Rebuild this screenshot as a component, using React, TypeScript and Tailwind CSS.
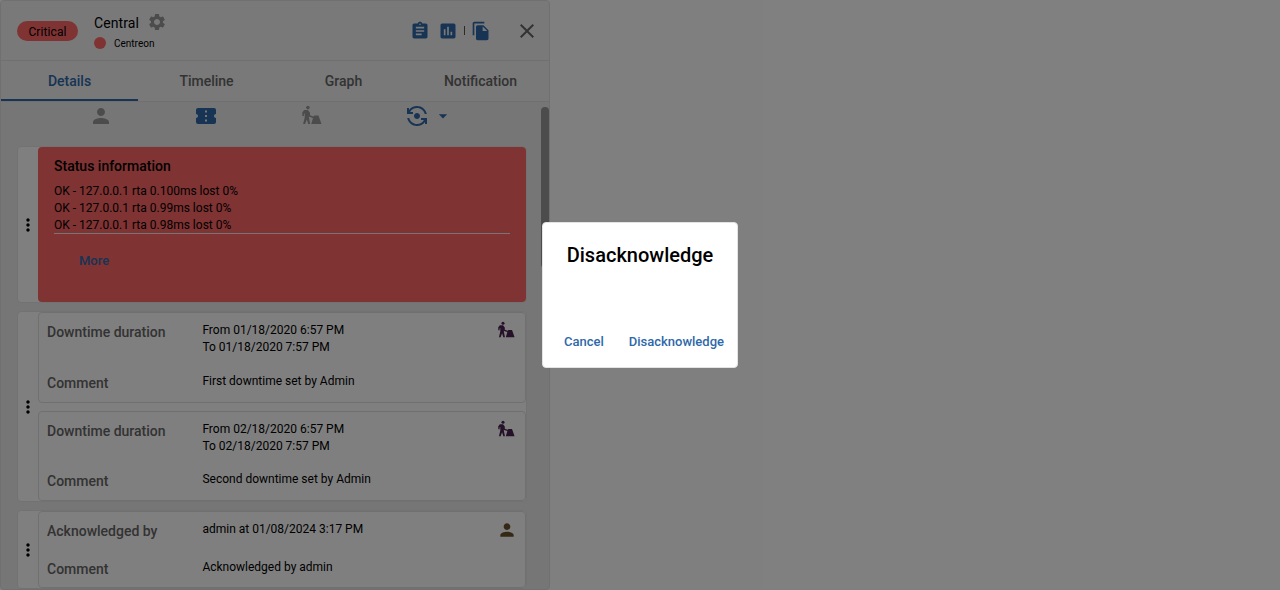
import type { ReactNode } from 'react';
import {
  MdArrowDropDown,
  MdAssessment,
  MdAssignment,
  MdClose,
  MdConfirmationNumber,
  MdFileCopy,
  MdFlipCameraAndroid,
  MdMoreVert,
  MdPerson,
  MdSettings,
} from 'react-icons/md';

function DowntimeIcon({ className }: { className: string }) {
  return (
    <svg viewBox="0 0 20 20" className={className} fill="currentColor">
      <circle cx="5.9" cy="2.6" r="1.8" />
      <path d="M2.2 5.100H5.900L8 7.700V10.200L11.400 11.500L12.300 10.500H16.500L19.500 19H9.200L11 13L7.200 11.700L6.800 11.200L7 13.100L8.200 19H6.200L4.800 14.400L3.100 19H1.100L2.700 12.400V8.300L1.900 8.900V11H.3V7.400Z" />
    </svg>
  );
}

function Group({ className, children }: { className: string; children: ReactNode }) {
  return (
    <section
      className={`flex w-[510px] shrink-0 rounded-[4px] border border-[#e4e4e4] bg-white ${className}`}
    >
      <div className="flex w-5 shrink-0 items-center justify-center text-black">
        <MdMoreVert className="size-5 shrink-0" />
      </div>
      <div className="flex min-w-0 flex-1 flex-col gap-2">{children}</div>
    </section>
  );
}

interface EntryProps {
  label: string;
  lines: string[];
  comment: string;
  icon: ReactNode;
  className: string;
  commentClass: string;
}

function Entry({ label, lines, comment, icon, className, commentClass }: EntryProps) {
  return (
    <article className={`relative rounded-[4px] border border-[#e0e0e0] bg-white pl-2 ${className}`}>
      <div className="flex pt-[9px]">
        <div className="w-[155.4px] text-sm font-medium leading-5 text-[#666]">{label}</div>
        <div className="text-xs leading-[17px]">
          {lines.map((line) => (
            <p key={line}>{line}</p>
          ))}
        </div>
      </div>
      <div className={`flex ${commentClass}`}>
        <div className="w-[155.4px] text-sm font-medium leading-5 text-[#666]">Comment</div>
        <p className="text-xs leading-[17px]">{comment}</p>
      </div>
      <div className="absolute right-2 top-2">{icon}</div>
    </article>
  );
}

const tabs = ['Details', 'Timeline', 'Graph', 'Notification'];

export default function App() {
  return (
    <div className="relative h-[590px] w-[1280px] overflow-hidden bg-white font-[Roboto,sans-serif] text-black">
      <main className="flex h-[590px] w-[550px] flex-col overflow-hidden rounded-[4px] border border-[#e0e0e0] bg-[#ececec]">
        <header className="flex h-[60px] shrink-0 items-center border-b border-[#e0e0e0] bg-[#f2f2f2] pl-4">
          <span className="mt-px flex h-5 w-[61px] items-center justify-center rounded-full bg-[#ff6666] pt-px text-xs tracking-[0.1px]">
            Critical
          </span>
          <div className="ml-4 flex flex-1 flex-col">
            <div className="flex h-6 items-center gap-2">
              <h1 className="text-sm tracking-[0.1px]">Central</h1>
              <MdSettings className="-mt-0.5 size-5 text-[#999]" />
            </div>
            <div className="flex h-4 items-center pt-px">
              <span className="size-3 rounded-full bg-[#ff6666]" />
              <span className="ml-2 text-[10px]">Centreon</span>
            </div>
          </div>
          <div className="flex items-center text-[#2e68aa]">
            <MdAssignment className="size-5" />
            <MdAssessment className="ml-2 size-5" />
            <span className="ml-[6px] h-[9px] w-px bg-[#555]" />
            <MdFileCopy className="ml-[6px] size-5" />
          </div>
          <MdClose className="ml-[24px] mr-[10px] size-6 text-[#666]" />
        </header>
        <nav className="flex h-[41px] shrink-0 border-b border-[#e0e0e0] bg-[#f2f2f2]">
          {tabs.map((tab, index) => (
            <div
              key={tab}
              className={`flex w-[137px] items-center justify-center border-b-2 pt-0.5 text-sm font-medium ${
                index === 0 ? 'border-[#2e68aa] text-[#2e68aa]' : 'border-transparent text-[#666]'
              }`}
            >
              {tab}
            </div>
          ))}
        </nav>
        <div className="flex min-h-0 flex-1">
          <div className="flex w-[540px] flex-col overflow-hidden pl-4">
            <div className="flex h-[44px] shrink-0 items-start pt-[2px]">
              <MdPerson className="ml-[72px] size-6 text-[#999]" />
              <MdConfirmationNumber className="ml-[81px] size-6 text-[#2e68aa]" />
              <DowntimeIcon className="ml-[84px] mt-px size-5 text-[#999]" />
              <MdFlipCameraAndroid className="ml-[83px] size-6 text-[#2e68aa]" />
              <MdArrowDropDown className="ml-1 mt-0.5 size-5 text-[#2e68aa]" />
            </div>
            <Group className="h-[157px]">
              <article className="h-[155px] rounded-[4px] bg-[#ff6666] px-4 pt-[9px]">
                <h2 className="text-sm font-medium leading-5">Status information</h2>
                <div className="mt-[7px] h-[51px] border-b border-[#ececec] text-xs leading-[17px]">
                  <p>OK - 127.0.0.1 rta 0.100ms lost 0%</p>
                  <p>OK - 127.0.0.1 rta 0.99ms lost 0%</p>
                  <p>OK - 127.0.0.1 rta 0.98ms lost 0%</p>
                </div>
                <button className="ml-[25px] mt-[17px] text-[13px] font-medium text-[#2e68aa]">More</button>
              </article>
            </Group>
            <Group className="mt-2 h-[191px]">
              <Entry
                className="h-[91px]"
                commentClass="mt-[17px]"
                label="Downtime duration"
                lines={['From 01/18/2020 6:57 PM', 'To 01/18/2020 7:57 PM']}
                comment="First downtime set by Admin"
                icon={<DowntimeIcon className="mr-0.5 size-[17px] text-[#4b2352]" />}
              />
              <Entry
                className="h-[90px]"
                commentClass="mt-[16px]"
                label="Downtime duration"
                lines={['From 02/18/2020 6:57 PM', 'To 02/18/2020 7:57 PM']}
                comment="Second downtime set by Admin"
                icon={<DowntimeIcon className="mr-0.5 size-[17px] text-[#4b2352]" />}
              />
            </Group>
            <Group className="mt-2 h-[79px]">
              <Entry
                className="h-[78px]"
                commentClass="mt-[18px]"
                label="Acknowledged by"
                lines={['admin at 01/08/2024 3:17 PM']}
                comment="Acknowledged by admin"
                icon={<MdPerson className="size-5 text-[#67532c]" />}
              />
            </Group>
          </div>
          <div className="mt-[5px] h-[161px] w-2 shrink-0 rounded-full bg-[#999]" />
        </div>
      </main>
      <div className="absolute inset-0 flex items-center justify-center bg-black/50">
        <div
          role="dialog"
          className="flex h-[146px] w-[196px] flex-col rounded-[4px] border border-[#e3e3e3] bg-white"
        >
          <h2 className="pt-4 text-center text-xl font-medium leading-8">Disacknowledge</h2>
          <div className="mt-auto flex justify-end gap-[25px] pb-[15px] pr-[13px] text-[13px] font-medium leading-5 text-[#2e68aa]">
            <button>Cancel</button>
            <button>Disacknowledge</button>
          </div>
        </div>
      </div>
    </div>
  );
}
